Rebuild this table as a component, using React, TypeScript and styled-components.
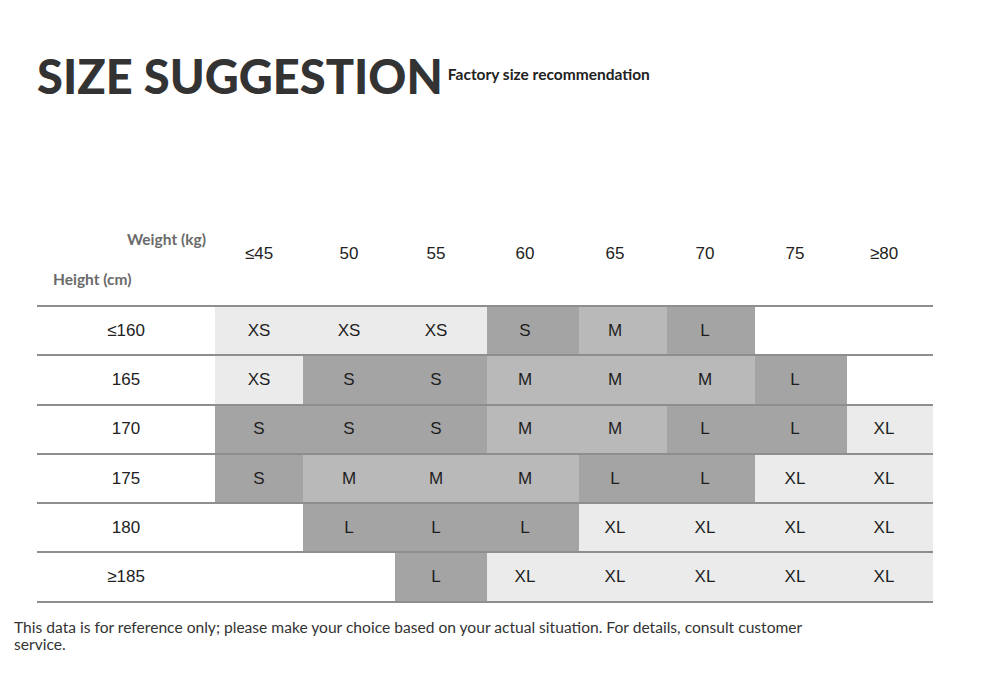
import React, { FC } from "react";
import styled, { createGlobalStyle } from "styled-components";

type Tone = "light" | "mid" | "dark" | "none";

const toneColor: Record<Tone, string> = {
  light: "#ebebeb",
  mid: "#b9b9b9",
  dark: "#a4a4a4",
  none: "transparent",
};

const weights = ["≤45", "50", "55", "60", "65", "70", "75", "≥80"];

// column widths taken from the chart, label column first
const columns = "178px 88px 92px 92px 92px 88px 88px 92px 86px";
// the printed labels sit a little left of centre in most columns
const nudge = [0, 0, 10, 16, 16, 12, 12, 12];

// size + shade for each cell, row by row
const rows: { height: string; cells: [string, Tone][] }[] = [
  {
    height: "≤160",
    cells: [
      ["XS", "light"], ["XS", "light"], ["XS", "light"], ["S", "dark"],
      ["M", "mid"], ["L", "dark"], ["", "none"], ["", "none"],
    ],
  },
  {
    height: "165",
    cells: [
      ["XS", "light"], ["S", "dark"], ["S", "dark"], ["M", "mid"],
      ["M", "mid"], ["M", "mid"], ["L", "dark"], ["", "none"],
    ],
  },
  {
    height: "170",
    cells: [
      ["S", "dark"], ["S", "dark"], ["S", "dark"], ["M", "mid"],
      ["M", "mid"], ["L", "dark"], ["L", "dark"], ["XL", "light"],
    ],
  },
  {
    height: "175",
    cells: [
      ["S", "dark"], ["M", "mid"], ["M", "mid"], ["M", "mid"],
      ["L", "dark"], ["L", "dark"], ["XL", "light"], ["XL", "light"],
    ],
  },
  {
    height: "180",
    cells: [
      ["", "none"], ["L", "dark"], ["L", "dark"], ["L", "dark"],
      ["XL", "light"], ["XL", "light"], ["XL", "light"], ["XL", "light"],
    ],
  },
  {
    height: "≥185",
    cells: [
      ["", "none"], ["", "none"], ["L", "dark"], ["XL", "light"],
      ["XL", "light"], ["XL", "light"], ["XL", "light"], ["XL", "light"],
    ],
  },
];

const GlobalStyle = createGlobalStyle`
  html, body {
    margin: 0;
    padding: 0;
    background: #fff;
  }
  body {
    font-family: "Lato", "Liberation Sans", sans-serif;
    color: #222;
  }
`;

const Page = styled.div`
  width: 1000px;
  height: 684px;
  overflow: hidden;
  padding-top: 52px;
  box-sizing: border-box;
`;

const TitleBar = styled.div`
  display: flex;
  align-items: flex-start;
  padding-left: 37px;
`;

const Title = styled.h1`
  margin: 0;
  font-family: "Lato", sans-serif;
  font-weight: 900;
  font-size: 47px;
  line-height: 48px;
  letter-spacing: 0;
  color: #333;
`;

const Subtitle = styled.span`
  margin: 12px 0 0 5px;
  font-family: "Lato", sans-serif;
  font-weight: 700;
  font-size: 15.5px;
  line-height: 20px;
  color: #222;
`;

const Table = styled.div`
  width: 896px;
  margin: 126px 0 0 37px;
`;

const HeaderRow = styled.div`
  display: grid;
  grid-template-columns: ${columns};
  height: 79px;
`;

const Corner = styled.div`
  position: relative;
`;

const AxisLabel = styled.span<{ $top: number; $left: number }>`
  position: absolute;
  top: ${(p) => p.$top}px;
  left: ${(p) => p.$left}px;
  font-size: 15.5px;
  font-weight: 700;
  color: #6a6a6a;
  line-height: 18px;
  white-space: nowrap;
`;

const WeightCell = styled.div<{ $nudge: number }>`
  padding: 18px ${(p) => p.$nudge}px 0 0;
  text-align: center;
  font-family: "Liberation Sans", sans-serif;
  font-size: 17px;
  line-height: 20px;
  color: #222;
`;

const Row = styled.div`
  display: grid;
  grid-template-columns: ${columns};
  height: 47.3px;
  border-top: 2px solid #8e8e8e;
  &:last-child {
    border-bottom: 2px solid #8e8e8e;
  }
`;

const RowLabel = styled.div`
  display: flex;
  align-items: center;
  justify-content: center;
  font-family: "Liberation Sans", sans-serif;
  font-size: 17px;
  color: #222;
`;

const SizeCell = styled.div<{ $tone: Tone; $nudge: number }>`
  display: flex;
  align-items: center;
  justify-content: center;
  padding-right: ${(p) => p.$nudge}px;
  background: ${(p) => toneColor[p.$tone]};
  font-family: "Liberation Sans", sans-serif;
  font-size: 17px;
  color: #1e1e1e;
`;

const Note = styled.p`
  margin: 16px 0 0 14px;
  width: 800px;
  font-family: "Lato", sans-serif;
  font-size: 15.6px;
  line-height: 17px;
  color: #333;
`;

const App: FC = () => (
  <Page>
    <GlobalStyle />
    <TitleBar>
      <Title>SIZE SUGGESTION</Title>
      <Subtitle>Factory size recommendation</Subtitle>
    </TitleBar>
    <Table>
      <HeaderRow>
        <Corner>
          <AxisLabel $top={4} $left={90}>Weight (kg)</AxisLabel>
          <AxisLabel $top={44} $left={16}>Height (cm)</AxisLabel>
        </Corner>
        {weights.map((w, i) => (
          <WeightCell key={w} $nudge={nudge[i]}>
            {w}
          </WeightCell>
        ))}
      </HeaderRow>
      {rows.map((r) => (
        <Row key={r.height}>
          <RowLabel>{r.height}</RowLabel>
          {r.cells.map(([size, tone], i) => (
            <SizeCell key={i} $tone={tone} $nudge={nudge[i]}>
              {size}
            </SizeCell>
          ))}
        </Row>
      ))}
    </Table>
    <Note>
      This data is for reference only; please make your choice based on your
      actual situation. For details, consult customer service.
    </Note>
  </Page>
);

export default App;
